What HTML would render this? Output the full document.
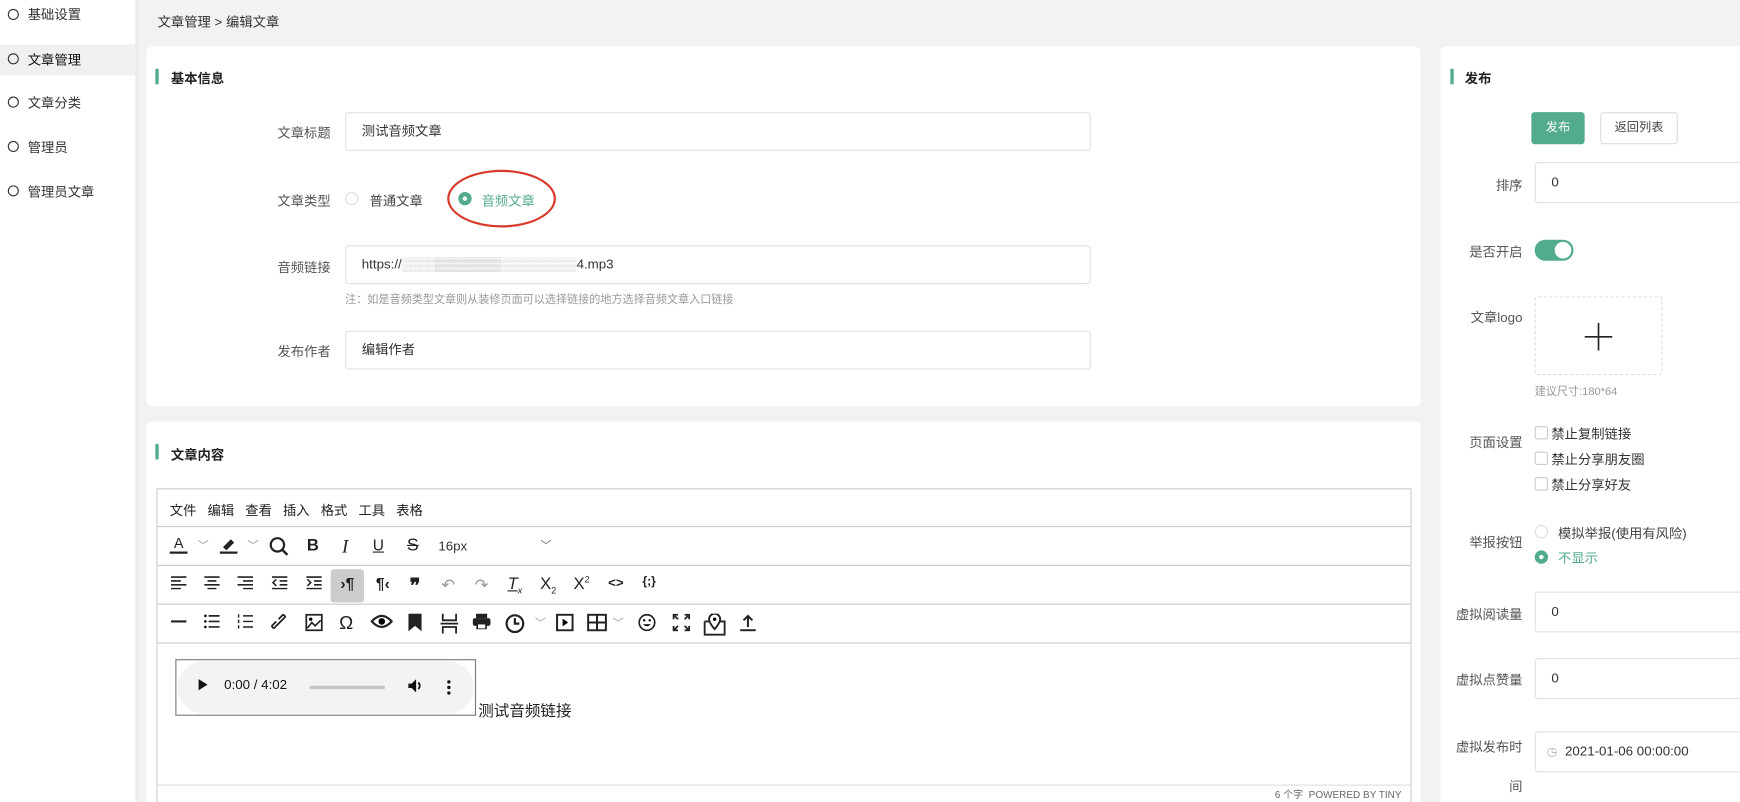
<!DOCTYPE html>
<html><head><meta charset="utf-8">
<style>
*{box-sizing:border-box;margin:0;padding:0}
html,body{width:1740px;height:802px;overflow:hidden;background:#f2f2f2}
body{font-family:"Liberation Sans","Noto Sans CJK SC",sans-serif;color:#333}
#w{position:absolute;left:0;top:0;width:1568px;height:723px;overflow:hidden;transform:scale(1.10969);transform-origin:0 0;background:#f2f2f2;font-size:12px}
.a{position:absolute;white-space:nowrap}
.side{left:0;top:0;width:122px;height:723px;background:#fff;box-shadow:1px 0 4px rgba(0,0,0,.08)}
.nav{left:0;width:122px;height:28px;line-height:28px;padding-left:25px;font-size:12px;color:#333}
.nav:before{content:"";position:absolute;left:7px;top:8px;width:8px;height:8px;border:1.6px solid #333;border-radius:50%}
.card{background:#fff;border-radius:5px}
.tt{font-weight:bold;font-size:12px;color:#222}
.bar{width:3px;height:14px;background:#52ab8e}
.lbl{font-size:12px;color:#555;text-align:right}
.inp{border:1px solid #e0e0e6;border-radius:3px;background:#fff;font-size:12px;color:#333;padding-left:14px}
.ed{border:1px solid #ccc}
.row{left:0;right:0;border-bottom:1px solid #ccc}
.ic{position:absolute;font-size:15px;color:#222;text-align:center;width:20px;margin-left:-10px}
.chk{width:12px;height:12px;border:1px solid #ccc;border-radius:2px;background:#fff}
</style></head><body><div id="w">

<div class="a side">
<div class="a nav" style="top:0;height:26px;line-height:26px">基础设置</div>
<div class="a nav" style="top:40px;background:#f0f0f0;color:#111">文章管理</div>
<div class="a nav" style="top:79px">文章分类</div>
<div class="a nav" style="top:119px">管理员</div>
<div class="a nav" style="top:159px">管理员文章</div>
</div>

<div class="a" style="left:142px;top:11px;font-size:12px;color:#333">文章管理 &gt; 编辑文章</div>

<div class="a card" style="left:132px;top:42px;width:1148px;height:324px"></div>
<div class="a bar" style="left:140px;top:62px"></div>
<div class="a tt" style="left:154px;top:62px">基本信息</div>

<div class="a lbl" style="left:200px;width:98px;top:111px">文章标题</div>
<div class="a inp" style="left:311px;top:101px;width:672px;height:35px;line-height:33px">测试音频文章</div>

<div class="a lbl" style="left:200px;width:98px;top:172px">文章类型</div>
<div class="a" style="left:311px;top:173px;width:12px;height:12px;border:1px solid #ddd;border-radius:50%"></div>
<div class="a" style="left:333px;top:172px;color:#444">普通文章</div>
<div class="a" style="left:413px;top:173px;width:12px;height:12px;border:4px solid #52ab8e;border-radius:50%;background:#fff"></div>
<div class="a" style="left:434px;top:172px;color:#52ab8e">音频文章</div>
<div class="a" style="left:403px;top:153px;width:98px;height:52px;border:2px solid #d9392b;border-radius:50%"></div>

<div class="a lbl" style="left:200px;width:98px;top:232px">音频链接</div>
<div class="a inp" style="left:311px;top:221px;width:672px;height:35px;line-height:33px">https://<span style="color:#ccc;letter-spacing:-1px">▒▒▒▒</span><span style="color:#aaa">▒▒▒▒▒▒▒</span><span style="color:#ccc">▒▒▒▒▒▒▒▒</span>4.mp3</div>
<div class="a" style="left:311px;top:261px;font-size:10px;color:#999">注：如是音频类型文章则从装修页面可以选择链接的地方选择音频文章入口链接</div>

<div class="a lbl" style="left:200px;width:98px;top:308px">发布作者</div>
<div class="a inp" style="left:311px;top:298px;width:672px;height:35px;line-height:33px">编辑作者</div>

<div class="a card" style="left:132px;top:380px;width:1148px;height:350px"></div>
<div class="a bar" style="left:140px;top:400px"></div>
<div class="a tt" style="left:154px;top:401px">文章内容</div>

<div class="a ed" style="left:141px;top:440px;width:1131px;height:300px;background:#fff">
 <div class="a row" style="top:0;height:34px"></div>
 <div class="a row" style="top:34px;height:35px"></div>
 <div class="a row" style="top:69px;height:35px"></div>
 <div class="a row" style="top:104px;height:35px"></div>
 <div class="a row" style="top:266px;height:1px;border-bottom:1px solid #ddd"></div>
 <div class="a" style="left:11px;top:10px;font-size:12px;color:#222">文件&nbsp;&nbsp;&nbsp;编辑&nbsp;&nbsp;&nbsp;查看&nbsp;&nbsp;&nbsp;插入&nbsp;&nbsp;&nbsp;格式&nbsp;&nbsp;&nbsp;工具&nbsp;&nbsp;&nbsp;表格</div>
 <div style="position:absolute;top:42px;left:0;right:0;height:20px">
  <div class="ic" style="left:19px;font-size:13px;border-bottom:2.5px solid #222;width:16px;margin-left:-8px;line-height:14px">A</div>
  <div class="ic" style="left:41px;color:#999;font-size:10px">﹀</div>
  <div class="ic" style="left:64px"><svg width="16" height="16"><path d="M3 10 L10 3 L13 6 L6 13Z" fill="#222"/><rect x="0" y="14" width="16" height="2.5" fill="#222"/></svg></div>
  <div class="ic" style="left:86px;color:#999;font-size:10px">﹀</div>
  <div class="ic" style="left:109px"><svg width="18" height="18"><circle cx="8" cy="8" r="6" fill="none" stroke="#222" stroke-width="2"/><path d="M12 12 L17 17" stroke="#222" stroke-width="2.2"/></svg></div>
  <div class="ic" style="left:140px;font-weight:bold">B</div>
  <div class="ic" style="left:169px;font-style:italic;font-family:'Liberation Serif',serif;font-size:17px">I</div>
  <div class="ic" style="left:199px;text-decoration:underline;font-size:14px">U</div>
  <div class="ic" style="left:230px;text-decoration:line-through;font-size:16px">S</div>
  <div class="a" style="left:253px;top:2px;font-size:12px;color:#333">16px</div>
  <div class="ic" style="left:350px;color:#666;font-size:10px">﹀</div>
 </div>
 <div class="a" style="left:156px;top:72px;width:30px;height:30px;background:#ccc;border-radius:3px"></div>
 <div style="position:absolute;top:77px;left:0;right:0;height:20px;font-weight:bold">
  <div class="ic" style="left:19px"><svg width="14" height="12"><path d="M0 1H14M0 4.5H9M0 8H14M0 11.5H9" stroke="#222" stroke-width="1.4"/></svg></div>
  <div class="ic" style="left:49px"><svg width="14" height="12"><path d="M0 1H14M3 4.5H11M0 8H14M3 11.5H11" stroke="#222" stroke-width="1.4"/></svg></div>
  <div class="ic" style="left:79px"><svg width="14" height="12"><path d="M0 1H14M5 4.5H14M0 8H14M5 11.5H14" stroke="#222" stroke-width="1.4"/></svg></div>
  <div class="ic" style="left:110px"><svg width="14" height="12"><path d="M0 1H14M7 4.5H14M7 8H14M0 11.5H14M4 3L1 6L4 9" stroke="#222" stroke-width="1.4" fill="none"/></svg></div>
  <div class="ic" style="left:141px"><svg width="14" height="12"><path d="M0 1H14M7 4.5H14M7 8H14M0 11.5H14M1 3L4 6L1 9" stroke="#222" stroke-width="1.4" fill="none"/></svg></div>
  <div class="ic" style="left:171px;font-size:14px">›¶</div>
  <div class="ic" style="left:203px;font-size:14px">¶‹</div>
  <div class="ic" style="left:232px;font-size:18px;line-height:20px">❞</div>
  <div class="ic" style="left:262px;color:#999;font-weight:normal">↶</div>
  <div class="ic" style="left:292px;color:#999;font-weight:normal">↷</div>
  <div class="ic" style="left:322px;font-style:italic;font-weight:normal;text-decoration:underline">T<sub style="font-size:8px">x</sub></div>
  <div class="ic" style="left:352px;font-weight:normal">X<sub style="font-size:8px">2</sub></div>
  <div class="ic" style="left:382px;font-weight:normal">X<sup style="font-size:8px">2</sup></div>
  <div class="ic" style="left:413px;font-size:12px">&lt;&gt;</div>
  <div class="ic" style="left:443px;font-size:11px">{;}</div>
 </div>
 <div style="position:absolute;top:112px;left:0;right:0;height:20px">
  <div class="ic" style="left:19px"><svg width="14" height="14"><path d="M0 7H14" stroke="#222" stroke-width="2"/></svg></div>
  <div class="ic" style="left:49px"><svg width="14" height="14"><path d="M4 2H14M4 7H14M4 12H14" stroke="#222" stroke-width="1.5"/><circle cx="1" cy="2" r="1.2"/><circle cx="1" cy="7" r="1.2"/><circle cx="1" cy="12" r="1.2"/></svg></div>
  <div class="ic" style="left:79px"><svg width="14" height="14"><path d="M5 2H14M5 7H14M5 12H14M1 0.5V3.5M1 5.5V8.5M1 10.5V13.5" stroke="#222" stroke-width="1.3"/></svg></div>
  <div class="ic" style="left:110px"><svg width="16" height="16"><path d="M7 9L3 13A2.5 2.5 0 0 1 1 11L5 7M9 7L13 3A2.5 2.5 0 0 0 11 1L7 5M5.5 10.5L10.5 5.5" stroke="#222" stroke-width="1.6" fill="none"/></svg></div>
  <div class="ic" style="left:141px"><svg width="16" height="16"><rect x="1" y="1" width="14" height="14" fill="none" stroke="#222" stroke-width="1.6"/><path d="M2 13L6 8L9 11L14 6" stroke="#222" stroke-width="1.5" fill="none"/><circle cx="5" cy="5" r="1.5"/></svg></div>
  <div class="ic" style="left:170px;font-size:17px;line-height:18px">Ω</div>
  <div class="ic" style="left:202px"><svg width="20" height="14"><path d="M1 7Q10 -3 19 7Q10 17 1 7Z" fill="none" stroke="#222" stroke-width="2"/><circle cx="10" cy="7" r="3"/></svg></div>
  <div class="ic" style="left:232px"><svg width="12" height="16"><path d="M0 0H12V16L6 11L0 16Z" fill="#222"/></svg></div>
  <div class="ic" style="left:263px"><svg width="16" height="18"><path d="M2 0V6H14V0M2 18V12H14V18M0 9H16" stroke="#222" stroke-width="1.6" fill="none"/></svg></div>
  <div class="ic" style="left:292px"><svg width="16" height="14"><rect x="3" y="0" width="10" height="4" fill="#222"/><rect x="0" y="4" width="16" height="7" rx="2" fill="#222"/><rect x="4" y="9" width="8" height="5" fill="#fff" stroke="#222" stroke-width="1.5"/></svg></div>
  <div class="ic" style="left:322px"><svg width="18" height="18"><circle cx="9" cy="9" r="7.5" fill="none" stroke="#222" stroke-width="2"/><path d="M9 4V9H13" stroke="#222" stroke-width="2" fill="none"/></svg></div>
  <div class="ic" style="left:345px;color:#999;font-size:10px">﹀</div>
  <div class="ic" style="left:367px"><svg width="16" height="16"><rect x="1" y="1" width="14" height="14" fill="none" stroke="#222" stroke-width="1.8"/><path d="M6 4.5L11 8L6 11.5Z"/></svg></div>
  <div class="ic" style="left:396px"><svg width="18" height="16"><rect x="1" y="1" width="16" height="14" fill="none" stroke="#222" stroke-width="1.8"/><path d="M1 8H17M9 1V15" stroke="#222" stroke-width="1.8"/></svg></div>
  <div class="ic" style="left:415px;color:#999;font-size:10px">﹀</div>
  <div class="ic" style="left:441px"><svg width="16" height="16"><circle cx="8" cy="8" r="7" fill="none" stroke="#222" stroke-width="1.5"/><circle cx="5.5" cy="6" r="1.1"/><circle cx="10.5" cy="6" r="1.1"/><path d="M4.5 9.5Q8 13 11.5 9.5Z"/></svg></div>
  <div class="ic" style="left:472px"><svg width="16" height="16"><path d="M1 5V1H5M11 1H15V5M15 11V15H11M5 15H1V11M2 2L5 5M14 2L11 5M14 14L11 11M2 14L5 11" stroke="#222" stroke-width="1.6" fill="none"/></svg></div>
  <div class="ic" style="left:502px"><svg width="20" height="20"><path d="M1 7H6M14 7H19V19H1V7" stroke="#222" stroke-width="1.7" fill="none"/><path d="M10 14Q5 8 5 5A5 5 0 0 1 15 5Q15 8 10 14Z" fill="none" stroke="#222" stroke-width="1.7"/><circle cx="10" cy="5" r="1.5"/></svg></div>
  <div class="ic" style="left:532px"><svg width="16" height="16"><path d="M8 12V2M4 6L8 2L12 6M1 15H15" stroke="#222" stroke-width="1.8" fill="none"/></svg></div>
 </div>
 <div class="a" style="left:16px;top:153px;width:271px;height:51px;border:1px solid #777">
  <div class="a" style="left:1px;top:1px;width:267px;height:47px;background:#f1f3f4;border-radius:24px"></div>
  <div class="a" style="left:20px;top:17px;width:0;height:0;border-left:8px solid #111;border-top:5px solid transparent;border-bottom:5px solid transparent"></div>
  <div class="a" style="left:43px;top:15px;font-size:12px;color:#111">0:00 / 4:02</div>
  <div class="a" style="left:120px;top:23px;width:68px;height:3px;background:#c5c5c5;border-radius:2px"></div>
  <svg class="a" style="left:208px;top:16px" width="14" height="14"><path d="M1 5H4L8 1V13L4 9H1Z" fill="#111"/><path d="M10 4Q12.5 7 10 10" stroke="#111" stroke-width="1.6" fill="none"/></svg>
  <div class="a" style="left:244px;top:18px;width:3px;height:3px;background:#111;border-radius:50%;box-shadow:0 5px 0 #111,0 10px 0 #111"></div>
 </div>
 <div class="a" style="left:289px;top:189px;font-size:14px;color:#222">测试音频链接</div>
 <div class="a" style="right:8px;top:268px;font-size:9px;color:#666">6 个字&nbsp; POWERED BY TINY</div>
</div>

<div class="a card" style="left:1298px;top:42px;width:290px;height:700px"></div>
<div class="a bar" style="left:1307px;top:62px"></div>
<div class="a tt" style="left:1320px;top:62px">发布</div>
<div class="a" style="left:1380px;top:101px;width:48px;height:29px;background:#52ab8e;border-radius:3px;color:#fff;text-align:center;line-height:29px;font-size:11px">发布</div>
<div class="a" style="left:1442px;top:101px;width:70px;height:29px;border:1px solid #ddd;border-radius:3px;color:#444;text-align:center;line-height:27px;font-size:11px;background:#fff">返回列表</div>

<div class="a lbl" style="left:1290px;width:82px;top:158px">排序</div>
<div class="a inp" style="left:1383px;top:146px;width:200px;height:37px;line-height:35px">0</div>

<div class="a lbl" style="left:1290px;width:82px;top:218px">是否开启</div>
<div class="a" style="left:1383px;top:216px;width:35px;height:19px;background:#52ab8e;border-radius:10px"></div>
<div class="a" style="left:1401px;top:218px;width:15px;height:15px;background:#fff;border-radius:50%"></div>

<div class="a lbl" style="left:1290px;width:82px;top:277px">文章logo</div>
<div class="a" style="left:1383px;top:267px;width:115px;height:71px;border:1px dashed #dcdce6;border-radius:3px"></div>
<svg class="a" style="left:1428px;top:291px" width="25" height="25"><path d="M12.5 0V25M0 12.5H25" stroke="#222" stroke-width="1.5"/></svg>
<div class="a" style="left:1383px;top:344px;font-size:10px;color:#999">建议尺寸:180*64</div>

<div class="a lbl" style="left:1290px;width:82px;top:390px">页面设置</div>
<div class="a chk" style="left:1383px;top:384px"></div><div class="a" style="left:1398px;top:382px">禁止复制链接</div>
<div class="a chk" style="left:1383px;top:407px"></div><div class="a" style="left:1398px;top:405px">禁止分享朋友圈</div>
<div class="a chk" style="left:1383px;top:430px"></div><div class="a" style="left:1398px;top:428px">禁止分享好友</div>

<div class="a lbl" style="left:1290px;width:82px;top:480px">举报按钮</div>
<div class="a" style="left:1383px;top:473px;width:12px;height:12px;border:1px solid #ddd;border-radius:50%"></div>
<div class="a" style="left:1404px;top:472px;color:#444">模拟举报(使用有风险)</div>
<div class="a" style="left:1383px;top:496px;width:12px;height:12px;border:4px solid #52ab8e;border-radius:50%;background:#fff"></div>
<div class="a" style="left:1404px;top:494px;color:#52ab8e">不显示</div>

<div class="a lbl" style="left:1290px;width:82px;top:545px">虚拟阅读量</div>
<div class="a inp" style="left:1383px;top:533px;width:200px;height:37px;line-height:35px">0</div>
<div class="a lbl" style="left:1290px;width:82px;top:604px">虚拟点赞量</div>
<div class="a inp" style="left:1383px;top:593px;width:200px;height:37px;line-height:35px">0</div>
<div class="a lbl" style="left:1290px;width:82px;top:664px">虚拟发布时</div>
<div class="a inp" style="left:1383px;top:659px;width:200px;height:37px;line-height:35px;padding-left:10px"><span style="color:#aaa;font-size:11px">◷</span>&nbsp; 2021-01-06 00:00:00</div>
<div class="a lbl" style="left:1290px;width:82px;top:700px">间</div>

</div></body></html>
